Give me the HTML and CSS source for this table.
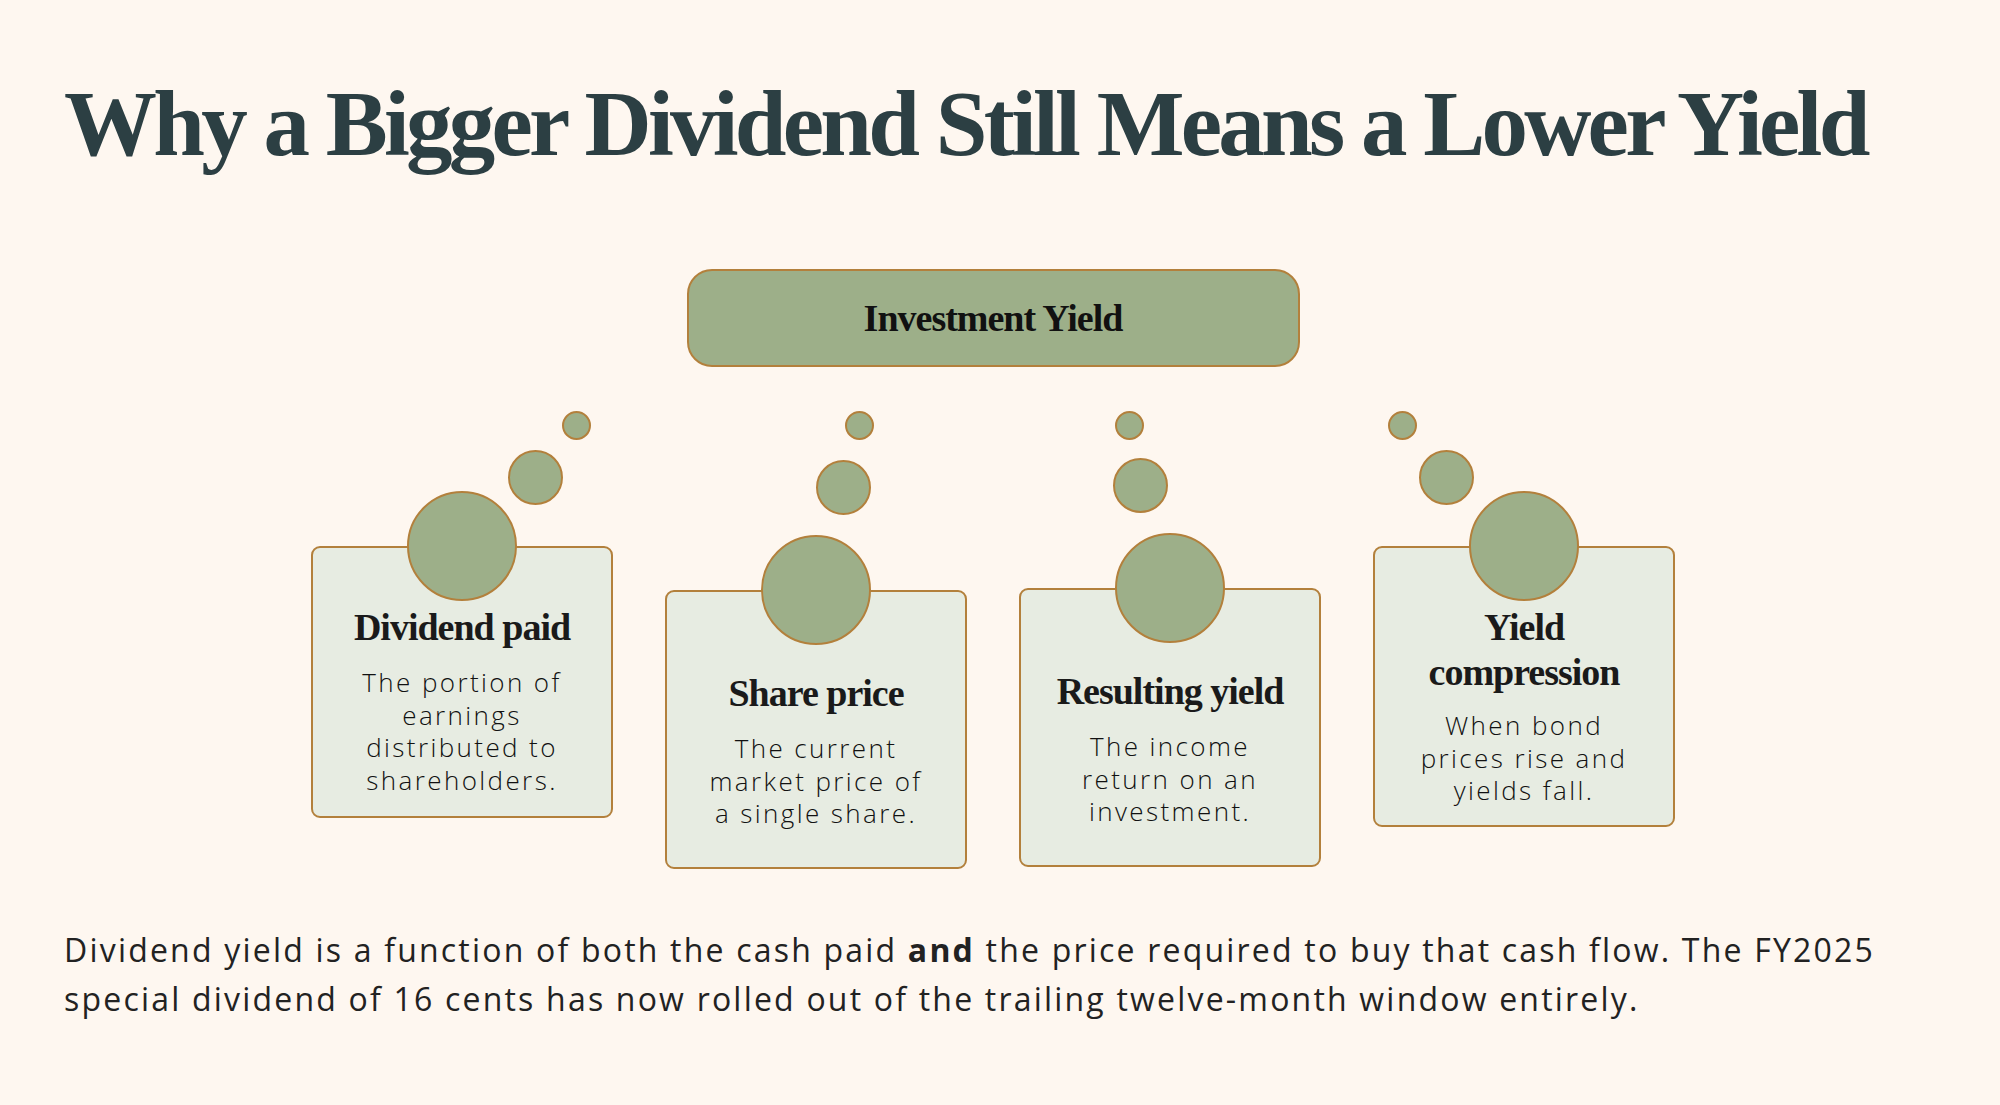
FILE: index.html
```html
<!DOCTYPE html>
<html lang="en">
<head>
<meta charset="utf-8">
<title>Why a Bigger Dividend Still Means a Lower Yield</title>
<link rel="stylesheet" href="styles.css">
</head>
<body>
<main class="page">
  <h1 class="title">Why a Bigger Dividend Still Means a Lower Yield</h1>
  <div class="hub">Investment Yield</div>
  <div class="cards">
    <div class="card card--high card--one">
      <span class="bubble bubble--big"></span>
      <span class="bubble bubble--mid"></span>
      <span class="bubble bubble--small"></span>
      <h2 class="card-title">Dividend paid</h2>
      <p class="card-text">The portion of<br>earnings<br>distributed to<br>shareholders.</p>
    </div>
    <div class="card card--low card--two">
      <span class="bubble bubble--big"></span>
      <span class="bubble bubble--mid"></span>
      <span class="bubble bubble--small"></span>
      <h2 class="card-title">Share price</h2>
      <p class="card-text">The current<br>market price of<br>a single share.</p>
    </div>
    <div class="card card--low card--three">
      <span class="bubble bubble--big"></span>
      <span class="bubble bubble--mid"></span>
      <span class="bubble bubble--small"></span>
      <h2 class="card-title">Resulting yield</h2>
      <p class="card-text">The income<br>return on an<br>investment.</p>
    </div>
    <div class="card card--high card--four">
      <span class="bubble bubble--big"></span>
      <span class="bubble bubble--mid"></span>
      <span class="bubble bubble--small"></span>
      <h2 class="card-title">Yield<br>compression</h2>
      <p class="card-text">When bond<br>prices rise and<br>yields fall.</p>
    </div>
  </div>
  <p class="note">Dividend yield is a function of both the cash paid <strong>and</strong> the price required to buy that cash flow. The FY2025<br>special dividend of 16 cents has now rolled out of the trailing twelve-month window entirely.</p>
</main>
</body>
</html>
```
FILE: styles.css
```css
html, body {
  margin: 0;
  padding: 0;
  background: #fef7f0;
}

.page {
  box-sizing: border-box;
  width: 2000px;
  min-height: 1105px;
  padding: 77px 78px 0 64px;
  font-family: "Open Sans", "Liberation Sans", sans-serif;
  color: #1f1f1f;
}

.title {
  margin: 0;
  font-family: "Liberation Serif", serif;
  font-weight: 700;
  font-size: 93px;
  line-height: 93px;
  letter-spacing: -3.75px;
  color: #2c3f43;
  white-space: nowrap;
}

.hub {
  box-sizing: border-box;
  width: 613px;
  height: 98px;
  margin: 99px auto 0;
  display: flex;
  align-items: center;
  justify-content: center;
  background: #9daf89;
  border: 2px solid #b3803c;
  border-radius: 25px;
  font-family: "Liberation Serif", serif;
  font-weight: 700;
  font-size: 38px;
  letter-spacing: -1px;
  color: #111;
}

.cards {
  display: flex;
  justify-content: center;
  align-items: flex-start;
  gap: 52px;
  margin-top: 179px;
}

.card {
  position: relative;
  box-sizing: border-box;
  width: 302px;
  padding-left: 16px;
  padding-right: 16px;
  background: #e7ece2;
  border: 2px solid #b3803c;
  border-radius: 9px;
  text-align: center;
}

.card--high {
  padding-top: 57px;
  padding-bottom: 20px;
}

.card--low {
  padding-top: 79px;
  padding-bottom: 37px;
}

.card--two { margin-top: 44px; }
.card--three { margin-top: 42px; }
.card--four { padding-bottom: 18px; }
.card--four .card-text { margin-top: 14px; }

.card-title {
  margin: 0;
  font-family: "Liberation Serif", serif;
  font-weight: 700;
  font-size: 38px;
  line-height: 45px;
  letter-spacing: -1px;
  color: #1a1a1a;
}

.card-text {
  margin: 16px 0 0;
  font-weight: 300;
  font-size: 26px;
  line-height: 32.5px;
  letter-spacing: 2.4px;
  color: #111;
  white-space: nowrap;
}

.bubble {
  position: absolute;
  box-sizing: border-box;
  border-radius: 50%;
  background: #9daf89;
  border: 2px solid #b3803c;
}

.bubble--big {
  width: 110px;
  height: 110px;
  left: 94px;
  top: -57px;
}

.bubble--mid {
  width: 55px;
  height: 55px;
}

.bubble--small {
  width: 29px;
  height: 29px;
}

.card--one .bubble--mid { left: 194.5px; top: -98.5px; }
.card--one .bubble--small { left: 248.5px; top: -137.5px; }

.card--two .bubble--mid { left: 148.5px; top: -132.5px; }
.card--two .bubble--small { left: 177.5px; top: -181.5px; }

.card--three .bubble--mid { left: 91.5px; top: -132.5px; }
.card--three .bubble--small { left: 93.5px; top: -179.5px; }

.card--four .bubble--mid { left: 43.5px; top: -98.5px; }
.card--four .bubble--small { left: 12.5px; top: -137.5px; }

.note {
  margin: 56px 0 0;
  font-size: 32px;
  line-height: 49px;
  font-weight: 400;
  letter-spacing: 2.2px;
  color: #222;
  white-space: nowrap;
}

.note strong {
  font-weight: 700;
}
```
